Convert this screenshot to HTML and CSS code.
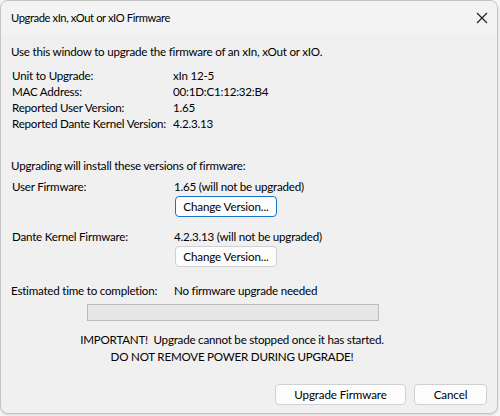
FILE: index.html
```html
<!DOCTYPE html>
<html>
<head>
<meta charset="utf-8">
<link rel="stylesheet" href="styles.css">
</head>
<body>
<div class="window">
  <div class="titlebar">
    <span class="title">Upgrade xIn, xOut or xIO Firmware</span>
    <svg class="close" width="12" height="12" viewBox="0 0 12 12"><path d="M1 1 L11 11 M11 1 L1 11" stroke="#1a1a1a" stroke-width="1.1" fill="none"/></svg>
  </div>
  <div class="content">
    <div class="intro">Use this window to upgrade the firmware of an xIn, xOut or xIO.</div>
    <div class="info">
      <span>Unit to Upgrade:</span><span class="val">xIn 12-5</span>
      <span>MAC Address:</span><span class="val">00:1D:C1:12:32:B4</span>
      <span>Reported User Version:</span><span class="val">1.65</span>
      <span>Reported Dante Kernel Version:</span><span class="val">4.2.3.13</span>
    </div>
    <div class="section">Upgrading will install these versions of firmware:</div>
    <div class="fw fw-user">
      <span class="lbl">User Firmware:</span><span class="val">1.65 (will not be upgraded)</span>
      <span></span><button class="btn focused">Change Version...</button>
    </div>
    <div class="fw fw-dante">
      <span class="lbl">Dante Kernel Firmware:</span><span class="val">4.2.3.13 (will not be upgraded)</span>
      <span></span><button class="btn">Change Version...</button>
    </div>
    <div class="fw fw-time">
      <span class="lbl">Estimated time to completion:</span><span class="val">No firmware upgrade needed</span>
    </div>
    <div class="progress-wrap"><div class="progress"></div></div>
    <div class="warning">
      <div>IMPORTANT!&nbsp; Upgrade cannot be stopped once it has started.</div>
      <div>DO NOT REMOVE POWER DURING UPGRADE!</div>
    </div>
    <div class="actions">
      <button class="btn wide">Upgrade Firmware</button>
      <button class="btn cancel">Cancel</button>
    </div>
  </div>
</div>
</body>
</html>
```

FILE: styles.css
```css
html, body {
  margin: 0;
  padding: 0;
  background: #f7f7f7;
}
body {
  font-family: "Lato", "Noto Sans", sans-serif;
  font-size: 11.6px;
  letter-spacing: -0.22px;
  color: #000;
  width: 500px;
  height: 416px;
  overflow: hidden;
  white-space: nowrap;
}
.window {
  width: 496px;
  height: 412px;
  border: 1px solid #c4c4c4;
  border-radius: 8px;
  background: #f0f0f0;
  overflow: hidden;
  box-shadow: 0 1px 3px rgba(0,0,0,0.15);
}
.titlebar {
  height: 33px;
  background: #f3f3f4;
  display: flex;
  align-items: center;
  justify-content: space-between;
  padding: 0 9px 0 10px;
}
.title {
  font-size: 11.2px;
  letter-spacing: -0.4px;
}
.close {
  display: block;
}
.content {
  padding: 10px 0 0 10px;
  line-height: 16px;
}
.info {
  margin-top: 8px;
  display: grid;
  grid-template-columns: 162px 1fr;
}
.info span:nth-child(odd) {
  padding-left: 1px;
}
.section {
  margin-top: 26px;
}
.fw {
  display: grid;
  grid-template-columns: 163px 1fr;
}
.fw .lbl {
  padding-left: 1px;
}
.fw-user { margin-top: 5px; }
.fw-dante { margin-top: 12px; }
.fw-time { margin-top: 16px; }
.fw-time .lbl { padding-left: 0; }
.fw .btn {
  margin-top: 1px;
  margin-left: 1px;
  width: 102px;
}
.btn {
  font-family: inherit;
  font-size: 11.6px;
  letter-spacing: -0.12px;
  height: 21px;
  line-height: 17px;
  padding: 0;
  background: #fdfdfd;
  border: 1px solid #d0d0d0;
  border-radius: 4px;
  color: #000;
}
.btn.focused {
  border-color: #1a73c8;
}
.progress-wrap {
  margin-top: 5px;
  padding-left: 76px;
}
.progress {
  width: 290px;
  height: 15px;
  background: #e6e6e6;
  border: 1px solid #bcbcbc;
}
.warning {
  margin-top: 10px;
  width: 442px;
  text-align: center;
  line-height: 17px;
}
.actions {
  margin-top: 19px;
  display: flex;
  justify-content: flex-end;
  gap: 8px;
  padding-right: 10px;
}
.btn.wide { width: 131px; }
.btn.cancel { width: 73px; }
```
